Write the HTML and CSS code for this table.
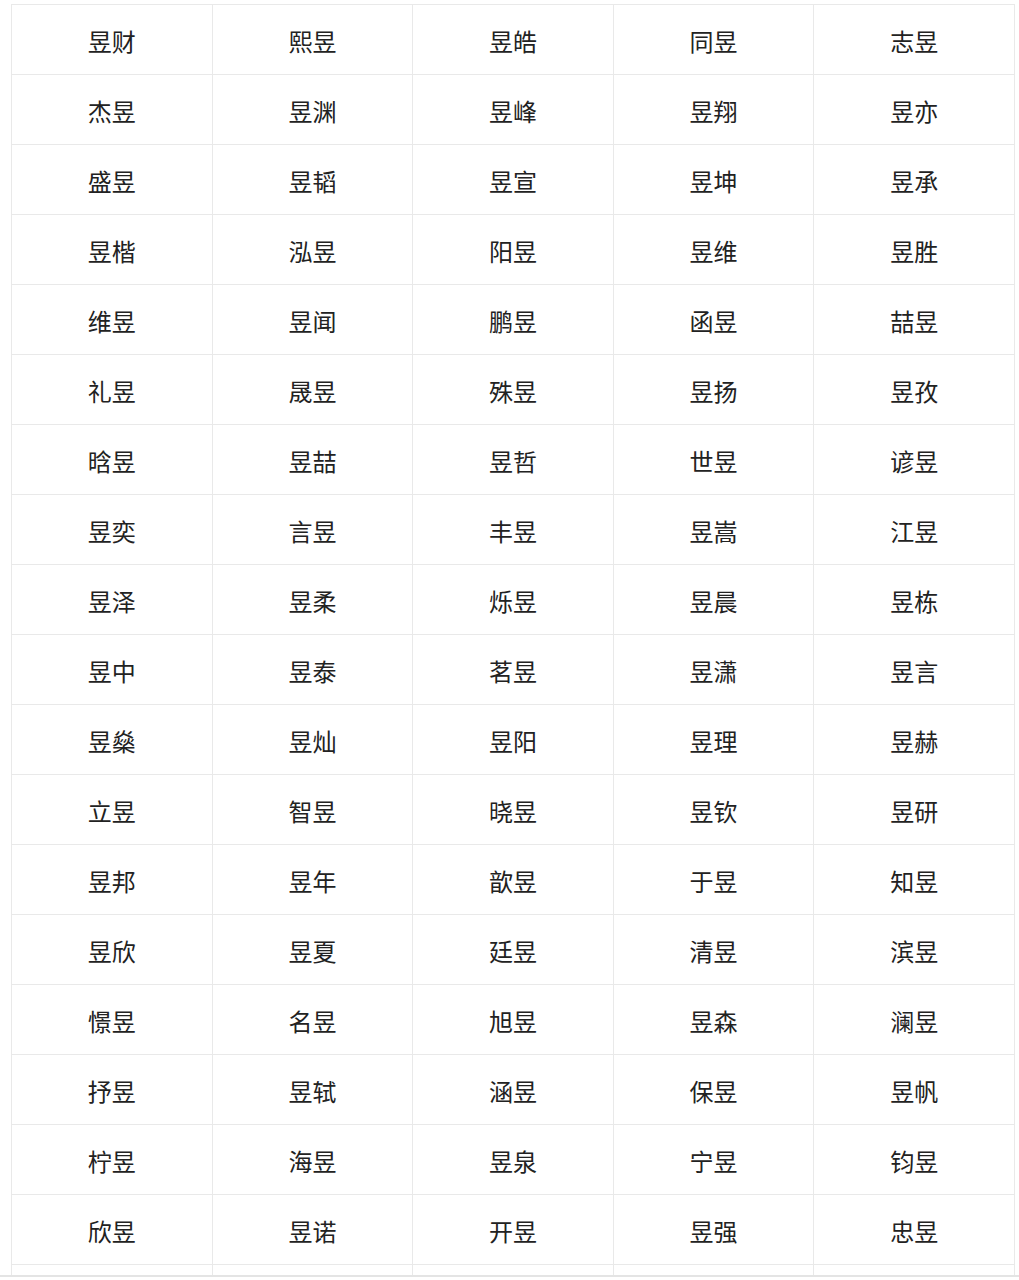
FILE: index.html
```html
<!DOCTYPE html>
<html lang="zh-CN">
<head>
<meta charset="utf-8">
<title>名字表</title>
<link rel="stylesheet" href="styles.css">
</head>
<body>
<div class="page">
<table class="names">
<tbody>
<tr><td>昱财</td><td>熙昱</td><td>昱皓</td><td>同昱</td><td>志昱</td></tr>
<tr><td>杰昱</td><td>昱渊</td><td>昱峰</td><td>昱翔</td><td>昱亦</td></tr>
<tr><td>盛昱</td><td>昱韬</td><td>昱宣</td><td>昱坤</td><td>昱承</td></tr>
<tr><td>昱楷</td><td>泓昱</td><td>阳昱</td><td>昱维</td><td>昱胜</td></tr>
<tr><td>维昱</td><td>昱闻</td><td>鹏昱</td><td>函昱</td><td>喆昱</td></tr>
<tr><td>礼昱</td><td>晟昱</td><td>殊昱</td><td>昱扬</td><td>昱孜</td></tr>
<tr><td>晗昱</td><td>昱喆</td><td>昱哲</td><td>世昱</td><td>谚昱</td></tr>
<tr><td>昱奕</td><td>言昱</td><td>丰昱</td><td>昱嵩</td><td>江昱</td></tr>
<tr><td>昱泽</td><td>昱柔</td><td>烁昱</td><td>昱晨</td><td>昱栋</td></tr>
<tr><td>昱中</td><td>昱泰</td><td>茗昱</td><td>昱潇</td><td>昱言</td></tr>
<tr><td>昱燊</td><td>昱灿</td><td>昱阳</td><td>昱理</td><td>昱赫</td></tr>
<tr><td>立昱</td><td>智昱</td><td>晓昱</td><td>昱钦</td><td>昱研</td></tr>
<tr><td>昱邦</td><td>昱年</td><td>歆昱</td><td>于昱</td><td>知昱</td></tr>
<tr><td>昱欣</td><td>昱夏</td><td>廷昱</td><td>清昱</td><td>滨昱</td></tr>
<tr><td>憬昱</td><td>名昱</td><td>旭昱</td><td>昱森</td><td>澜昱</td></tr>
<tr><td>抒昱</td><td>昱轼</td><td>涵昱</td><td>保昱</td><td>昱帆</td></tr>
<tr><td>柠昱</td><td>海昱</td><td>昱泉</td><td>宁昱</td><td>钧昱</td></tr>
<tr><td>欣昱</td><td>昱诺</td><td>开昱</td><td>昱强</td><td>忠昱</td></tr>
<tr><td>&nbsp;</td><td>&nbsp;</td><td>&nbsp;</td><td>&nbsp;</td><td>&nbsp;</td></tr>
</tbody>
</table>
</div>
</body>
</html>
```

FILE: styles.css
```css
html, body {
  margin: 0;
  padding: 0;
  background: #ffffff;
}

.page {
  height: 1271px;
  overflow: hidden;
  padding: 4px 4px 0 11px;
  border-bottom: 2px solid #e4e4e4;
  box-sizing: content-box;
}

.names {
  width: 1004px;
  border-collapse: collapse;
  table-layout: fixed;
  font-family: "Noto Sans CJK SC", "Microsoft YaHei", sans-serif;
  font-size: 24px;
  color: #222222;
}

.names td {
  height: 67px;
  padding: 2px 0 0 0;
  border: 1px solid #e9e9e9;
  text-align: center;
  vertical-align: middle;
  line-height: 1;
}
```
